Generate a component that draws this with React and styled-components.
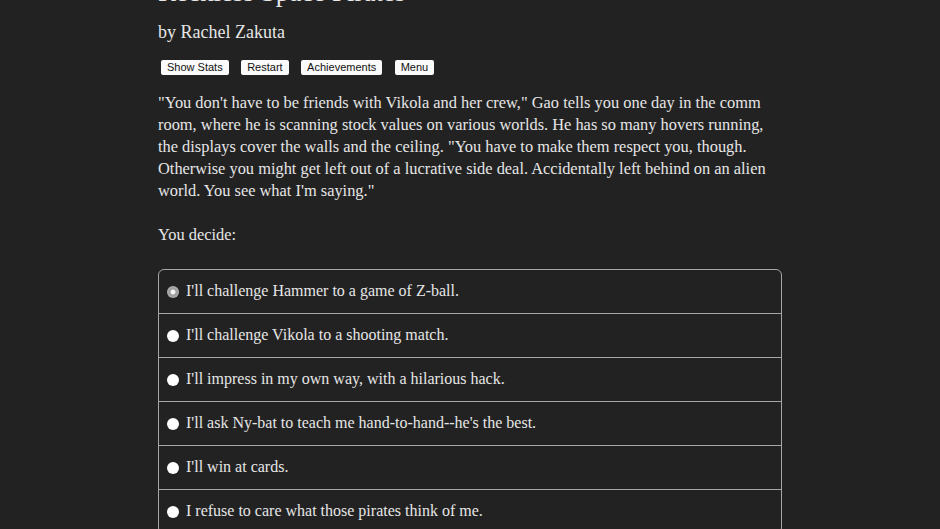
import React from 'react';
import styled, { createGlobalStyle } from 'styled-components';

const GlobalStyle = createGlobalStyle`
  html, body {
    margin: 0;
    padding: 0;
    background: #222222;
    overflow: hidden;
  }
  *{
    box-sizing: border-box;
  }
`;

const Page = styled.div`
  width: 624px;
  margin: -24px auto 0;
  font-family: "Liberation Serif", "DejaVu Serif", serif;
  color: #e6e6e6;
`;

const Title = styled.h1`
  margin: 0;
  font-size: 27px;
  font-weight: normal;
  line-height: 33px;
`;

const Byline = styled.h2`
  margin: 11px 0 0;
  font-size: 18px;
  font-weight: normal;
  line-height: 24px;
`;

const ButtonBar = styled.div`
  display: flex;
  gap: 12.5px;
  margin: 16px 0 0 3px;
`;

const Button = styled.button`
  height: 15px;
  padding: 0 6px;
  border: none;
  border-radius: 2px;
  background: #fafafa;
  color: #111;
  font-family: "Liberation Sans", Arial, sans-serif;
  font-size: 11px;
  line-height: 15px;
`;

const Paragraph = styled.p`
  margin: 17px 0 0;
  font-size: 16.4px;
  line-height: 22px;
`;

const Prompt = styled.p`
  margin: 22px 0 0;
  font-size: 16.4px;
  line-height: 22px;
`;

const ChoiceList = styled.div`
  margin-top: 23px;
  border: 1px solid #a6a6a6;
  border-radius: 6px;
`;

const Choice = styled.label`
  display: flex;
  align-items: center;
  height: ${props => props.first ? '43px' : '44px'};
  padding: 0 0 2px 8px;
  font-size: 16px;
  border-top: ${props => props.first ? 'none' : '1px solid #a6a6a6'};
`;

const Radio = styled.span`
  width: 12px;
  height: 12px;
  border-radius: 50%;
  margin: 2px 7px 0 0;
  flex-shrink: 0;
  background: ${props => props.checked
    ? 'radial-gradient(circle, #f4f4f4 0 2px, #9a9a9a 3px, #b0b0b0 6px)'
    : '#ffffff'};
`;

const choices = [
  "I'll challenge Hammer to a game of Z-ball.",
  "I'll challenge Vikola to a shooting match.",
  "I'll impress in my own way, with a hilarious hack.",
  "I'll ask Ny-bat to teach me hand-to-hand--he's the best.",
  "I'll win at cards.",
  "I refuse to care what those pirates think of me.",
];

export default function App() {
  return (
    <>
      <GlobalStyle />
      <Page>
        <Title>Reckless Space Pirates</Title>
        <Byline>by Rachel Zakuta</Byline>
        <ButtonBar>
          <Button>Show Stats</Button>
          <Button>Restart</Button>
          <Button>Achievements</Button>
          <Button>Menu</Button>
        </ButtonBar>
        <Paragraph>
          "You don't have to be friends with Vikola and her crew," Gao tells you one day in the comm room, where he is scanning stock values on various worlds. He has so many hovers running, the displays cover the walls and the ceiling. "You have to make them respect you, though. Otherwise you might get left out of a lucrative side deal. Accidentally left behind on an alien world. You see what I'm saying."
        </Paragraph>
        <Prompt>You decide:</Prompt>
        <ChoiceList>
          {choices.map((c, i) => (
            <Choice key={i} first={i === 0}>
              <Radio checked={i === 0} />
              {c}
            </Choice>
          ))}
        </ChoiceList>
      </Page>
    </>
  );
}
